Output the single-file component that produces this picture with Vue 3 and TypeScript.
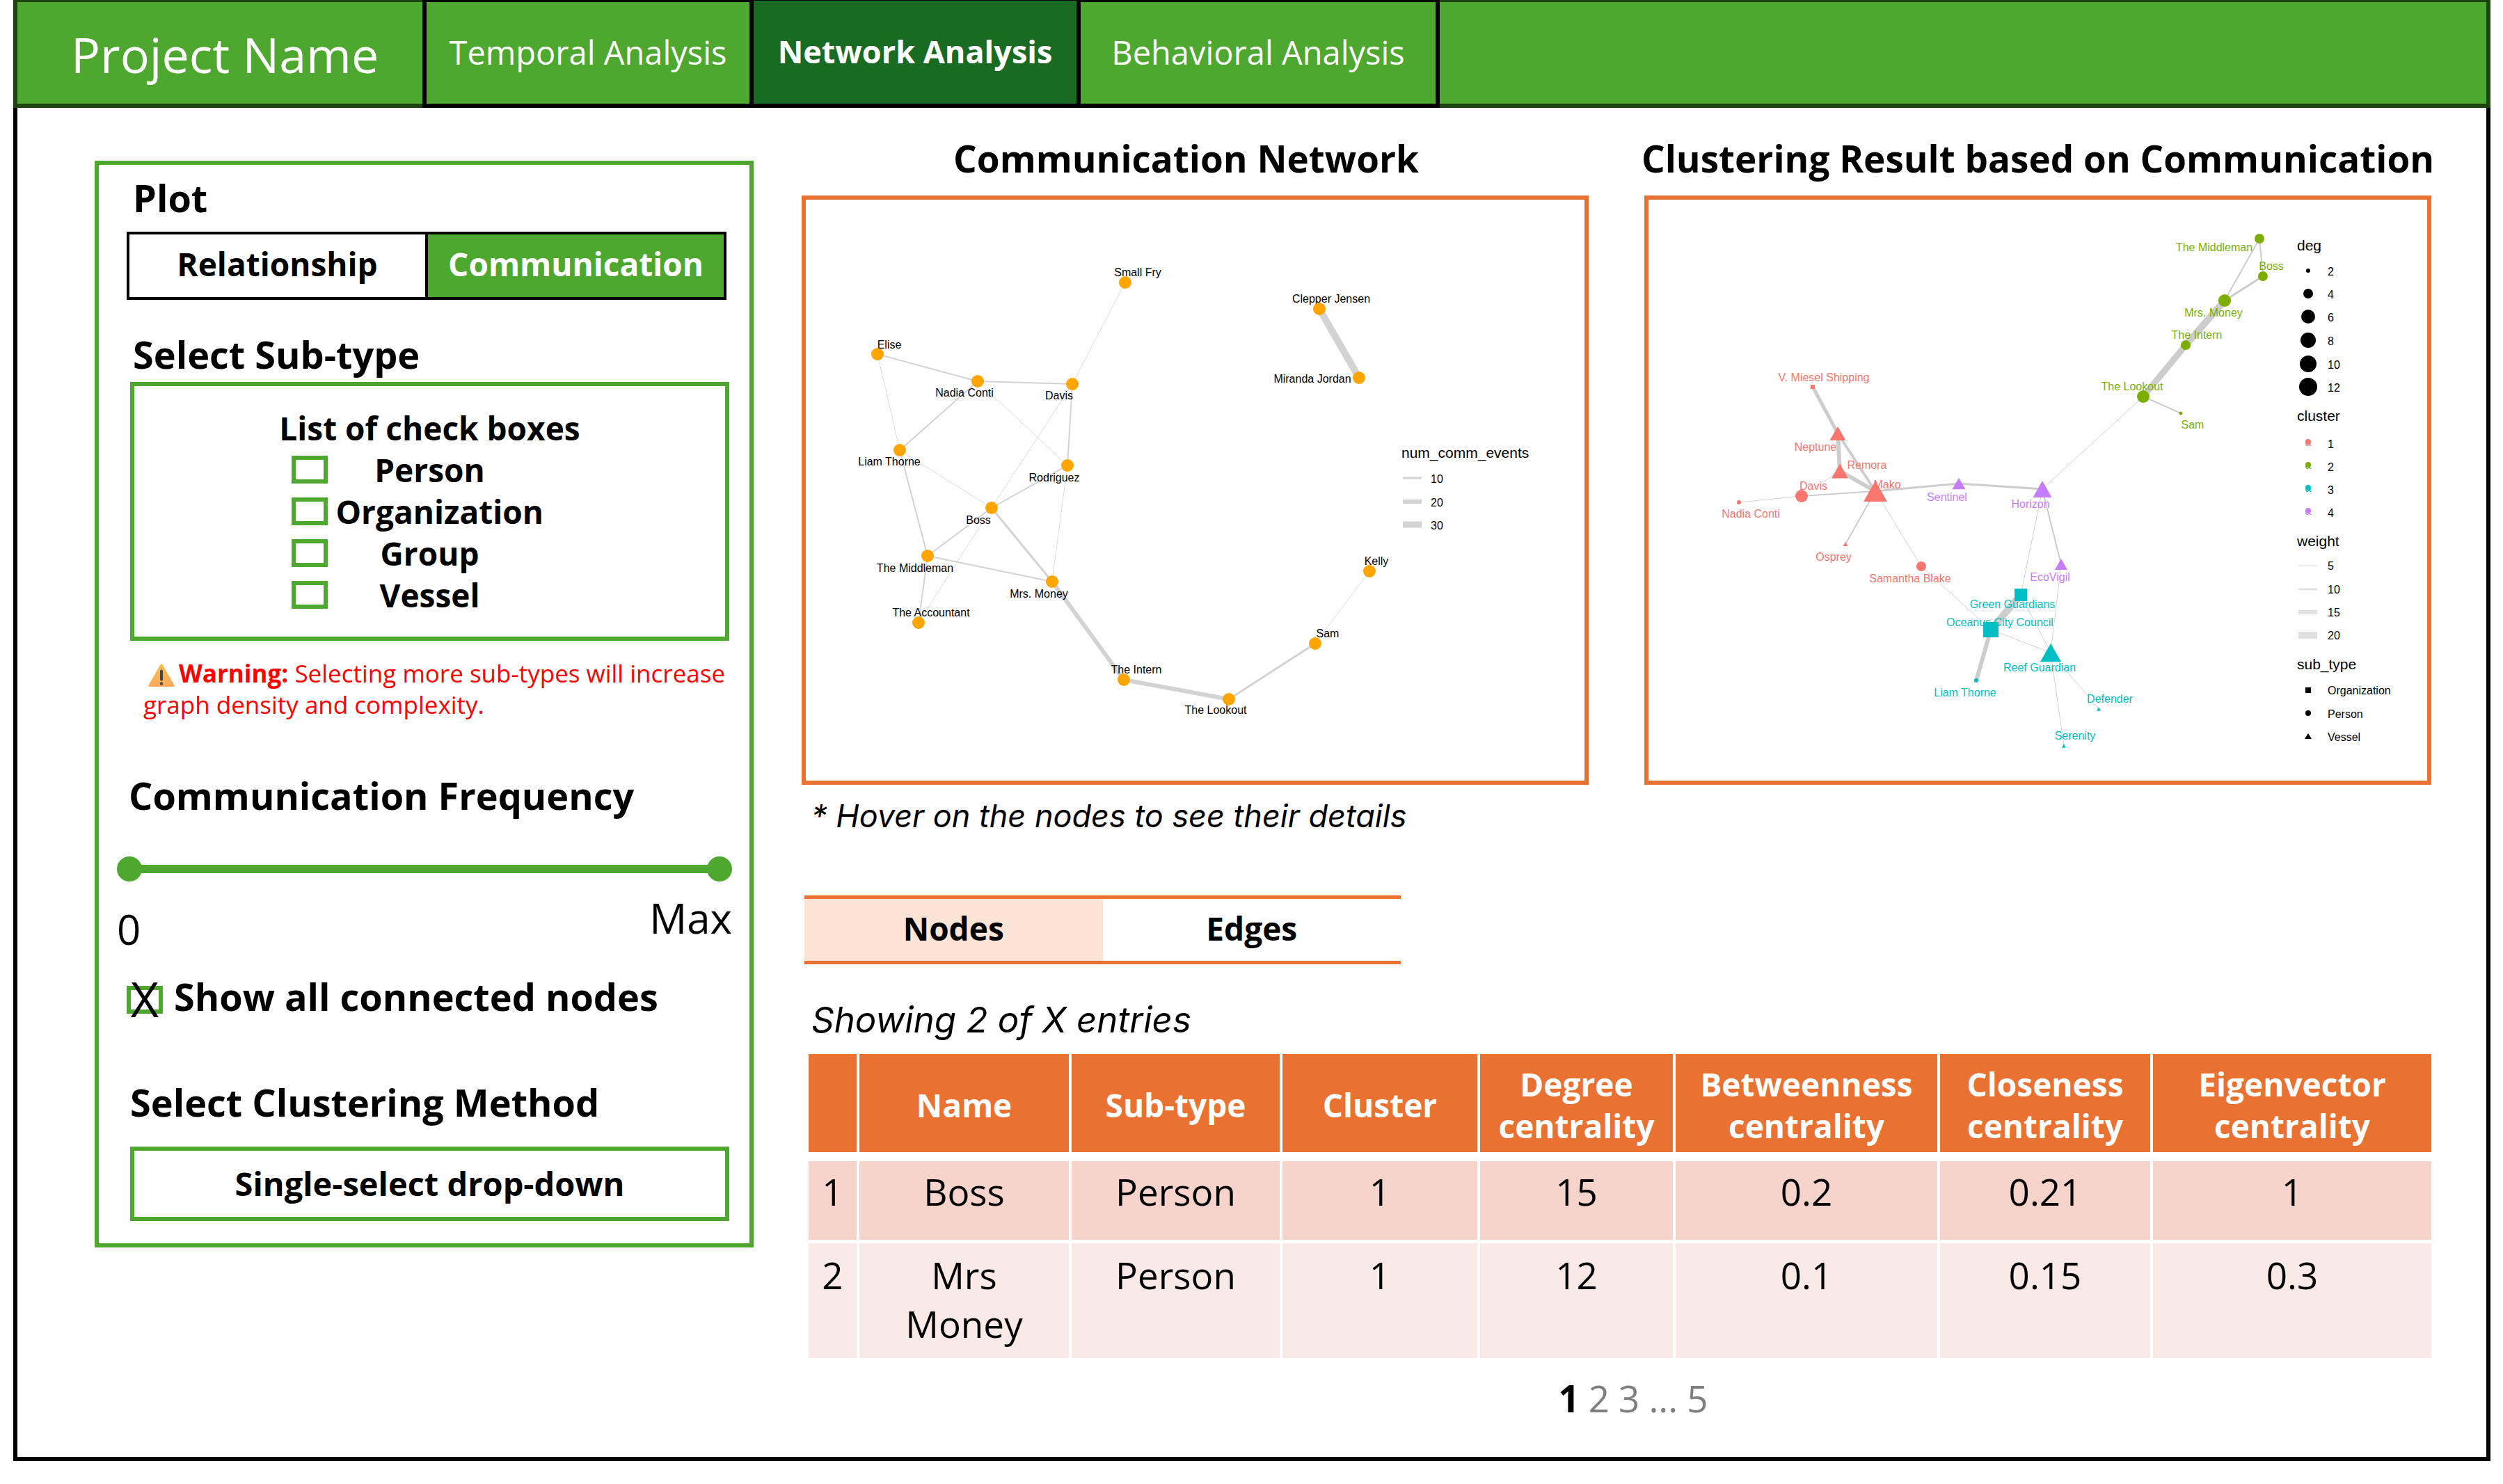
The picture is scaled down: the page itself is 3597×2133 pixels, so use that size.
<script setup lang="ts">
import { ref } from 'vue'

type Shape = 'circle' | 'square' | 'triangle'

interface GraphNode {
  name: string
  x: number
  y: number
  lx: number
  ly: number
  size: number
  shape: Shape
  color: string
}

interface Edge {
  from: [number, number]
  to: [number, number]
  width: number
  color: string
}

const tabs = ['Temporal Analysis', 'Network Analysis', 'Behavioral Analysis']
const activeTab = ref('Network Analysis')
const plots = ['Relationship', 'Communication']
const activePlot = ref('Communication')
const subTypes = ['Person', 'Organization', 'Group', 'Vessel']
const selectedSubTypes = ref<string[]>([])
const minFrequency = ref(0)
const maxFrequency = ref(100)
const showConnected = ref(true)
const tableTabs = ['Nodes', 'Edges']
const activeTableTab = ref('Nodes')

const columns = ['', 'Name', 'Sub-type', 'Cluster', 'Degree centrality', 'Betweenness centrality', 'Closeness centrality', 'Eigenvector centrality']
const rows = [
  ['1', 'Boss', 'Person', '1', '15', '0.2', '0.21', '1'],
  ['2', 'Mrs Money', 'Person', '1', '12', '0.1', '0.15', '0.3'],
]

const ORANGE = '#ffa500'
const RED = '#f8766d'
const GREEN = '#7cae00'
const TEAL = '#00bfc4'
const PURPLE = '#c77cff'

function person(name: string, x: number, y: number, lx: number, ly: number): GraphNode {
  return { name, x, y, lx, ly, size: 18, shape: 'circle', color: ORANGE }
}

function member(name: string, x: number, y: number, lx: number, ly: number, size: number, shape: Shape, color: string): GraphNode {
  return { name, x, y, lx, ly, size, shape, color }
}

const commNodes: GraphNode[] = [
  person('Small Fry', 459, 119, 477, 110),
  person('Elise', 103, 222, 120, 214),
  person('Nadia Conti', 247, 261, 228, 283),
  person('Davis', 383, 265, 364, 287),
  person('Liam Thorne', 135, 360, 120, 382),
  person('Rodriguez', 376, 382, 357, 405),
  person('Boss', 267, 443, 248, 466),
  person('The Middleman', 175, 512, 157, 535),
  person('Mrs. Money', 354, 549, 335, 572),
  person('The Accountant', 162, 608, 180, 599),
  person('The Intern', 457, 690, 475, 681),
  person('The Lookout', 608, 718, 589, 739),
  person('Sam', 732, 638, 750, 629),
  person('Kelly', 810, 534, 820, 525),
  person('Clepper Jensen', 738, 157, 755, 148),
  person('Miranda Jordan', 795, 256, 728, 263),
]

const clusterNodes: GraphNode[] = [
  member('V. Miesel Shipping', 238, 269, 254, 261, 6, 'square', RED),
  member('Neptune', 274, 336, 242, 361, 23, 'triangle', RED),
  member('Remora', 277, 390, 316, 387, 24, 'triangle', RED),
  member('Davis', 222, 426, 239, 417, 18, 'circle', RED),
  member('Mako', 328, 419, 345, 415, 34, 'triangle', RED),
  member('Nadia Conti', 132, 435, 149, 457, 6, 'circle', RED),
  member('Osprey', 285, 495, 268, 519, 7, 'triangle', RED),
  member('Samantha Blake', 394, 527, 378, 550, 14, 'circle', RED),
  member('Sentinel', 448, 408, 431, 433, 19, 'triangle', PURPLE),
  member('Horizon', 568, 416, 551, 443, 27, 'triangle', PURPLE),
  member('EcoVigil', 595, 524, 579, 548, 18, 'triangle', PURPLE),
  member('Green Guardians', 537, 568, 525, 587, 18, 'square', TEAL),
  member('Oceanus City Council', 494, 618, 507, 613, 22, 'square', TEAL),
  member('Reef Guardian', 580, 651, 564, 678, 30, 'triangle', TEAL),
  member('Liam Thorne', 473, 691, 457, 714, 6, 'circle', TEAL),
  member('Defender', 649, 732, 665, 723, 6, 'triangle', TEAL),
  member('Serenity', 599, 785, 615, 776, 6, 'triangle', TEAL),
  member('The Middleman', 880, 56, 815, 74, 14, 'circle', GREEN),
  member('Boss', 885, 110, 897, 101, 14, 'circle', GREEN),
  member('Mrs. Money', 830, 145, 814, 168, 18, 'circle', GREEN),
  member('The Intern', 774, 209, 790, 200, 14, 'circle', GREEN),
  member('The Lookout', 713, 283, 697, 274, 18, 'circle', GREEN),
  member('Sam', 767, 307, 784, 329, 5, 'circle', GREEN),
]

function buildEdges(nodes: GraphNode[], links: [string, string, number][], faint: string, strong: string): Edge[] {
  const find = (name: string): [number, number] => {
    const node = nodes.find((n) => n.name === name)
    return node ? [node.x, node.y] : [0, 0]
  }
  return links.map(([a, b, width]) => ({
    from: find(a),
    to: find(b),
    width,
    color: width === 1 ? faint : strong,
  }))
}

const commEdges = buildEdges(commNodes, [
  ['Small Fry', 'Davis', 1],
  ['Elise', 'Nadia Conti', 2],
  ['Elise', 'Liam Thorne', 1],
  ['Nadia Conti', 'Davis', 2],
  ['Nadia Conti', 'Liam Thorne', 2],
  ['Nadia Conti', 'Rodriguez', 1],
  ['Davis', 'Boss', 1],
  ['Davis', 'Rodriguez', 2],
  ['Liam Thorne', 'Boss', 1],
  ['Liam Thorne', 'The Middleman', 2],
  ['Rodriguez', 'Boss', 2],
  ['Rodriguez', 'Mrs. Money', 1],
  ['Boss', 'The Middleman', 2],
  ['Boss', 'The Accountant', 1],
  ['Boss', 'Mrs. Money', 3],
  ['The Middleman', 'The Accountant', 2],
  ['The Middleman', 'Mrs. Money', 2],
  ['Mrs. Money', 'The Intern', 6],
  ['The Intern', 'The Lookout', 6],
  ['The Lookout', 'Sam', 3],
  ['Sam', 'Kelly', 1],
  ['Clepper Jensen', 'Miranda Jordan', 10],
], '#dcdcdc', '#d3d3d3')

const clusterEdges = buildEdges(clusterNodes, [
  ['V. Miesel Shipping', 'Neptune', 5],
  ['Neptune', 'Remora', 6],
  ['Neptune', 'Mako', 4],
  ['Remora', 'Mako', 6],
  ['Remora', 'Davis', 1],
  ['Davis', 'Mako', 2],
  ['Davis', 'Nadia Conti', 1],
  ['Mako', 'Osprey', 2],
  ['Mako', 'Samantha Blake', 1],
  ['Mako', 'Sentinel', 3],
  ['Sentinel', 'Horizon', 3],
  ['Horizon', 'The Lookout', 1],
  ['Horizon', 'EcoVigil', 2],
  ['Horizon', 'Green Guardians', 1],
  ['EcoVigil', 'Reef Guardian', 1],
  ['Samantha Blake', 'Oceanus City Council', 1],
  ['Green Guardians', 'Oceanus City Council', 10],
  ['Green Guardians', 'Reef Guardian', 1],
  ['Oceanus City Council', 'Liam Thorne', 6],
  ['Oceanus City Council', 'Reef Guardian', 1],
  ['Reef Guardian', 'Defender', 1],
  ['Reef Guardian', 'Serenity', 1],
  ['The Lookout', 'The Intern', 9],
  ['The Intern', 'Mrs. Money', 10],
  ['Mrs. Money', 'Boss', 3],
  ['Mrs. Money', 'The Middleman', 2],
  ['The Middleman', 'Boss', 2],
  ['The Lookout', 'Sam', 2],
], '#d2d2d2', '#cdcdcd')

function trianglePoints(n: GraphNode): string {
  const w = n.size / 2
  const h = n.size * 0.44
  return `${n.x},${n.y - h} ${n.x + w},${n.y + h} ${n.x - w},${n.y + h}`
}

const eventLegend = [
  { label: '10', y: 400, width: 3 },
  { label: '20', y: 434, width: 6 },
  { label: '30', y: 467, width: 9 },
]
const degLegend = [
  { label: '2', y: 102, r: 3 },
  { label: '4', y: 135, r: 7 },
  { label: '6', y: 168, r: 10 },
  { label: '8', y: 202, r: 11 },
  { label: '10', y: 236, r: 12 },
  { label: '12', y: 269, r: 13 },
]
const colorLegend = [
  { label: '1', y: 350, color: RED },
  { label: '2', y: 383, color: GREEN },
  { label: '3', y: 416, color: TEAL },
  { label: '4', y: 449, color: PURPLE },
]
const weightLegend = [
  { label: '5', y: 526, width: 1 },
  { label: '10', y: 560, width: 3 },
  { label: '15', y: 593, width: 6 },
  { label: '20', y: 626, width: 10 },
]
</script>

<template>
  <div class="page">
    <header class="topbar">
      <h1 class="brand">Project Name</h1>
      <nav class="tabs" aria-label="Analyses">
        <button
          v-for="tab in tabs"
          :key="tab"
          type="button"
          class="tab"
          :class="{ active: tab === activeTab }"
          @click="activeTab = tab"
        >{{ tab }}</button>
      </nav>
    </header>

    <div class="body">
      <aside class="sidebar">
        <h2 class="heading inset">Plot</h2>
        <div class="toggle">
          <button
            v-for="plot in plots"
            :key="plot"
            type="button"
            :class="{ active: plot === activePlot }"
            @click="activePlot = plot"
          >{{ plot }}</button>
        </div>

        <h2 id="subtype-heading" class="heading inset subtype-heading">Select Sub-type</h2>
        <div class="subtypes" role="group" aria-labelledby="subtype-heading">
          <p class="list-title">List of check boxes</p>
          <label v-for="type in subTypes" :key="type" class="check-row">
            <input v-model="selectedSubTypes" type="checkbox" class="box" :value="type" />
            <span>{{ type }}</span>
          </label>
        </div>

        <p class="warning">
          <svg class="warning-icon" viewBox="0 0 38 33" aria-hidden="true">
            <defs>
              <linearGradient id="warn" x1="0" y1="0" x2="0" y2="1">
                <stop offset="0" stop-color="#f3c14f" />
                <stop offset="1" stop-color="#ffa75c" />
              </linearGradient>
            </defs>
            <path d="M17.4 1.2Q19-.8 20.6 1.2L37.3 30.4Q38 33 35.6 33H2.4Q0 33 .7 30.4Z" fill="url(#warn)" />
            <path d="M19 10.500V22.500" stroke="#46464f" stroke-width="4" stroke-linecap="round" />
            <circle cx="19" cy="28.500" r="2.200" fill="#46464f" />
          </svg>
          <strong>Warning:</strong> Selecting more sub-types will increase<br />graph density and complexity.
        </p>

        <h2 class="heading frequency-heading">Communication Frequency</h2>
        <div class="range">
          <div class="track"></div>
          <input v-model.number="minFrequency" type="range" min="0" max="100" aria-label="Minimum communication frequency" />
          <input v-model.number="maxFrequency" type="range" min="0" max="100" aria-label="Maximum communication frequency" />
        </div>
        <div class="range-labels">
          <span class="range-min">0</span>
          <span>Max</span>
        </div>

        <label class="connected">
          <span class="connected-box">
            <input v-model="showConnected" type="checkbox" class="box" />
            <span v-if="showConnected" class="mark" aria-hidden="true">X</span>
          </span>
          <span>Show all connected nodes</span>
        </label>

        <label class="heading method-heading" for="method">Select Clustering Method</label>
        <select id="method" class="method">
          <option>Single-select drop-down</option>
        </select>
      </aside>

      <main class="main">
        <div class="charts">
          <section>
            <h2 class="chart-title comm-title">Communication Network</h2>
            <div class="chart">
              <svg viewBox="0 0 1119 835" role="img" aria-label="Communication network graph">
                <line
                  v-for="(e, i) in commEdges"
                  :key="i"
                  :x1="e.from[0]"
                  :y1="e.from[1]"
                  :x2="e.to[0]"
                  :y2="e.to[1]"
                  :stroke="e.color"
                  :stroke-width="e.width"
                />
                <text v-for="n in commNodes" :key="n.name" :x="n.lx" :y="n.ly" class="node-label">{{ n.name }}</text>
                <circle v-for="n in commNodes" :key="n.name" :cx="n.x" :cy="n.y" :r="n.size / 2" :fill="n.color" />

                <text x="856" y="371" class="legend-title">num_comm_events</text>
                <g v-for="item in eventLegend" :key="item.label">
                  <line x1="858" x2="885" :y1="item.y" :y2="item.y" stroke="#d3d3d3" :stroke-width="item.width" />
                  <text x="898" :y="item.y + 7" class="legend-label">{{ item.label }}</text>
                </g>
              </svg>
            </div>
            <p class="hint">* Hover on the nodes to see their details</p>
          </section>

          <section>
            <h2 class="chart-title">Clustering Result based on Communication</h2>
            <div class="chart">
              <svg viewBox="2 0 1119 835" role="img" aria-label="Clustering result graph">
                <line
                  v-for="(e, i) in clusterEdges"
                  :key="i"
                  :x1="e.from[0]"
                  :y1="e.from[1]"
                  :x2="e.to[0]"
                  :y2="e.to[1]"
                  :stroke="e.color"
                  :stroke-width="e.width"
                />
                <text v-for="n in clusterNodes" :key="n.name" :x="n.lx" :y="n.ly" :fill="n.color" class="node-label">{{ n.name }}</text>
                <template v-for="n in clusterNodes" :key="n.name">
                  <circle v-if="n.shape === 'circle'" :cx="n.x" :cy="n.y" :r="n.size / 2" :fill="n.color" />
                  <rect
                    v-else-if="n.shape === 'square'"
                    :x="n.x - n.size / 2"
                    :y="n.y - n.size / 2"
                    :width="n.size"
                    :height="n.size"
                    :fill="n.color"
                  />
                  <polygon v-else :points="trianglePoints(n)" :fill="n.color" />
                </template>

                <text x="934" y="73" class="legend-title">deg</text>
                <g v-for="item in degLegend" :key="item.label">
                  <circle cx="950" :cy="item.y" :r="item.r" />
                  <text x="978" :y="item.y + 7" class="legend-label">{{ item.label }}</text>
                </g>

                <text x="934" y="318" class="legend-title">cluster</text>
                <g v-for="item in colorLegend" :key="item.label">
                  <text x="950" :y="item.y + 4" :fill="item.color" class="node-label">a</text>
                  <circle cx="950" :cy="item.y - 2" r="4" :fill="item.color" />
                  <text x="978" :y="item.y + 7" class="legend-label">{{ item.label }}</text>
                </g>

                <text x="934" y="498" class="legend-title">weight</text>
                <g v-for="item in weightLegend" :key="item.label">
                  <line x1="936" x2="963" :y1="item.y" :y2="item.y" stroke="#e0e0e0" :stroke-width="item.width" />
                  <text x="978" :y="item.y + 6" class="legend-label">{{ item.label }}</text>
                </g>

                <text x="934" y="675" class="legend-title">sub_type</text>
                <rect x="946" y="701" width="8" height="8" />
                <circle cx="950" cy="738" r="4" />
                <polygon points="950,767 955,775 945,775" />
                <text x="978" y="711" class="legend-label">Organization</text>
                <text x="978" y="745" class="legend-label">Person</text>
                <text x="978" y="778" class="legend-label">Vessel</text>
              </svg>
            </div>
          </section>
        </div>

        <div class="table-tabs">
          <button
            v-for="tab in tableTabs"
            :key="tab"
            type="button"
            :class="{ active: tab === activeTableTab }"
            @click="activeTableTab = tab"
          >{{ tab }}</button>
        </div>

        <p class="showing">Showing 2 of X entries</p>

        <table class="metrics">
          <colgroup>
            <col class="c-index" />
            <col class="c-name" />
            <col class="c-type" />
            <col class="c-cluster" />
            <col class="c-degree" />
            <col class="c-between" />
            <col class="c-close" />
            <col class="c-eigen" />
          </colgroup>
          <thead>
            <tr>
              <th v-for="(col, i) in columns" :key="i" scope="col">{{ col }}</th>
            </tr>
          </thead>
          <tbody>
            <tr v-for="row in rows" :key="row[0]">
              <td v-for="(cell, i) in row" :key="i">{{ cell }}</td>
            </tr>
          </tbody>
        </table>

        <nav class="pages" aria-label="Pages">
          <a href="#1" class="current" aria-current="page">1</a>
          <a href="#2">2</a>
          <a href="#3">3</a>
          <span>...</span>
          <a href="#5">5</a>
        </nav>
      </main>
    </div>
  </div>
</template>

<style>
body {
  margin: 0;
  background: #fff;
}
</style>

<style scoped>
* {
  box-sizing: border-box;
}

.page {
  margin: 0 18px 0 19px;
  border: solid #000;
  border-width: 0 6px 6px;
  font-family: "Open Sans", "Noto Sans", sans-serif;
  font-size: 46px;
  line-height: 60px;
  color: #000;
}

h1,
h2,
p {
  margin: 0;
}

button,
select {
  font: inherit;
  color: inherit;
  cursor: pointer;
}

.topbar {
  display: flex;
  height: 155px;
  margin: 0 -6px;
  border: solid #1d430f;
  border-width: 3px 6px 6px;
  background: #4ea72e;
  color: #fff;
}

.brand {
  width: 582px;
  padding: 30px 0 0 77px;
  font-size: 70px;
  line-height: 90px;
  font-weight: 400;
  white-space: nowrap;
}

.tabs {
  display: flex;
  margin: -3px 0 -6px;
}

.tab {
  width: 476px;
  margin-right: -6px;
  padding: 0 0 2px;
  border: solid #000;
  border-width: 3px 6px 6px;
  background: #4ea72e;
  font-size: 47px;
  white-space: nowrap;
}

.tab:last-child {
  width: 522px;
}

.tab.active {
  position: relative;
  border-top-width: 1px;
  background: #196b24;
  font-size: 45px;
  font-weight: 700;
}

.body {
  display: grid;
  grid-template-columns: 947fr 2342fr;
  align-items: start;
  gap: 69px;
  padding: 38px 79px 49px 111px;
}

.sidebar {
  min-width: 0;
  margin-top: 38px;
  padding: 12px 29px 32px 45px;
  border: 6px solid #4ea72e;
}

.heading {
  display: block;
  font-size: 54px;
  line-height: 70px;
  font-weight: 700;
  white-space: nowrap;
}

.inset {
  padding-left: 4px;
}

.toggle {
  display: flex;
  height: 98px;
  margin: 14px 4px 0 -5px;
  border: 4px solid #000;
}

.toggle button {
  flex: 1;
  padding: 0 0 6px;
  border: 0;
  background: #fff;
  font-weight: 700;
}

.toggle button + button {
  border-left: 4px solid #000;
}

.toggle .active {
  background: #4ea72e;
  color: #fff;
}

.subtype-heading {
  margin-top: 43px;
}

.subtypes {
  margin-top: 5px;
  padding: 30px 0;
  border: 6px solid #4ea72e;
  font-weight: 700;
}

.list-title {
  text-align: center;
}

.check-row {
  display: flex;
  align-items: center;
  gap: 12px;
  width: 398px;
  margin: 0 auto;
}

.check-row span {
  min-width: 270px;
  text-align: center;
}

.box {
  appearance: none;
  flex: none;
  display: block;
  width: 52px;
  height: 40px;
  margin: 0;
  border: 6px solid #4ea72e;
  background: #fff;
}

.check-row .box:checked {
  background: #4ea72e;
}

.warning {
  margin-top: 24px;
  padding-left: 19px;
  color: #f00;
  font-size: 35px;
  line-height: 45px;
  white-space: nowrap;
}

.warning-icon {
  width: 38px;
  height: 33px;
  margin: 0 6px 0 7px;
  vertical-align: -6px;
}

.frequency-heading {
  margin: 73px 0 0 -2px;
}

.range {
  position: relative;
  height: 36px;
  margin: 53px -4px 0 -19px;
}

.track {
  position: absolute;
  top: 12px;
  left: 18px;
  right: 18px;
  height: 12px;
  background: #4ea72e;
}

.range input {
  position: absolute;
  inset: 0;
  appearance: none;
  width: 100%;
  height: 36px;
  margin: 0;
  background: transparent;
  pointer-events: none;
}

.range input::-webkit-slider-thumb {
  appearance: none;
  width: 36px;
  height: 36px;
  border: 0;
  border-radius: 50%;
  background: #4ea72e;
  pointer-events: auto;
}

.range-labels {
  display: flex;
  align-items: flex-start;
  justify-content: space-between;
  margin: 12px -4px 0 -19px;
  font-size: 60px;
  line-height: 80px;
}

.range-min {
  padding-top: 16px;
}

.connected {
  display: flex;
  align-items: center;
  gap: 16px;
  margin: 22px 0 0 -5px;
  font-size: 54px;
  line-height: 70px;
  font-weight: 700;
  white-space: nowrap;
}

.connected-box {
  position: relative;
  margin-top: 10px;
}

.mark {
  position: absolute;
  inset: -22px 0;
  font-size: 70px;
  line-height: 80px;
  font-weight: 400;
  text-align: center;
}

.method-heading {
  margin-top: 82px;
}

.method {
  appearance: none;
  display: block;
  width: 100%;
  height: 107px;
  margin-top: 29px;
  padding: 0 0 2px;
  border: 6px solid #4ea72e;
  border-radius: 0;
  background: #fff;
  font-size: 47px;
  font-weight: 700;
  text-align: center;
  text-align-last: center;
}

.main {
  min-width: 0;
}

.charts {
  display: grid;
  grid-template-columns: repeat(2, minmax(0, 1fr));
  gap: 80px;
}

.chart-title {
  display: flex;
  justify-content: center;
  margin-bottom: 18px;
  font-size: 53px;
  line-height: 70px;
  font-weight: 700;
  white-space: nowrap;
}

.comm-title {
  padding-right: 26px;
}

.chart {
  border: 6px solid #e97132;
}

.chart svg {
  display: block;
  width: 100%;
  height: auto;
  font-family: "Liberation Sans", Arial, sans-serif;
}

.node-label {
  font-size: 16px;
  text-anchor: middle;
}

.legend-label {
  font-size: 16px;
}

.legend-title {
  font-size: 21px;
}

.hint {
  margin-top: 15px;
  padding-left: 14px;
  font-family: Inter, sans-serif;
  font-size: 45px;
  font-style: italic;
}

.table-tabs {
  display: flex;
  width: 857px;
  height: 99px;
  margin: 84px 0 0 4px;
  border: solid #e97132;
  border-width: 5px 0;
}

.table-tabs button {
  flex: 1;
  padding: 0 0 6px;
  border: 0;
  background: #fff;
  font-weight: 700;
}

.table-tabs .active {
  background: #fbe3d6;
}

.showing {
  margin-top: 45px;
  padding-left: 14px;
  font-family: Inter, sans-serif;
  font-size: 51px;
  line-height: 70px;
  font-style: italic;
}

.metrics {
  table-layout: fixed;
  width: calc(100% - 10px);
  margin: 14px 0 0 10px;
  border-collapse: separate;
  border-spacing: 0;
  text-align: center;
}

/* Fixed layout scales these proportionally to fill the table. */
.c-index { width: 73px; }
.c-name { width: 305px; }
.c-type { width: 303px; }
.c-cluster { width: 284px; }
.c-degree { width: 281px; }
.c-between { width: 380px; }
.c-close { width: 306px; }
.c-eigen { width: 400px; }

.metrics th {
  height: 154px;
  padding: 4px 0 0;
  border: solid #fff;
  border-width: 0 4px 13px 0;
  background: #e97132;
  color: #fff;
  font-weight: 700;
}

.metrics td {
  height: 118px;
  padding: 9px 40px 16px;
  border: solid #fff;
  border-width: 0 4px 5px 0;
  background: #f6d3cb;
  font-size: 53px;
  line-height: 70px;
  vertical-align: top;
}

.metrics td:first-child {
  padding-left: 0;
  padding-right: 0;
}

.metrics tr:last-child td {
  padding-top: 11px;
  padding-bottom: 14px;
  border-bottom-width: 0;
  background: #faeae7;
}

.metrics th:last-child,
.metrics td:last-child {
  border-right-width: 0;
}

.pages {
  display: flex;
  justify-content: center;
  gap: 13px;
  margin-top: 23px;
  padding-left: 48px;
  color: #7f7f7f;
  font-size: 53px;
  line-height: 70px;
}

.pages a {
  color: inherit;
  text-decoration: none;
}

.pages .current {
  color: #000;
  font-weight: 700;
}
</style>
